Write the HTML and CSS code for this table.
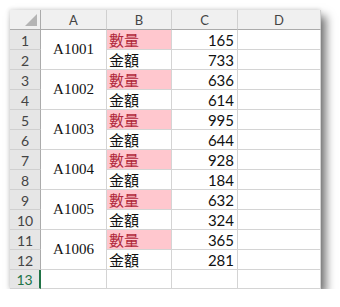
FILE: index.html
```html
<!DOCTYPE html>
<html>
<head>
<meta charset="utf-8">
<link rel="stylesheet" href="styles.css">
</head>
<body>
<div class="sheet">
  <div class="corner hdr"><span class="tri"></span></div>
  <div class="col hdr">A</div>
  <div class="col hdr">B</div>
  <div class="col hdr">C</div>
  <div class="col hdr last">D</div>

  <div class="rh hdr">1</div><div class="id span2">A1001</div><div class="lbl qty">數量</div><div class="num">165</div><div class="cell last"></div>
  <div class="rh hdr">2</div><div class="lbl">金額</div><div class="num">733</div><div class="cell last"></div>
  <div class="rh hdr">3</div><div class="id span2">A1002</div><div class="lbl qty">數量</div><div class="num">636</div><div class="cell last"></div>
  <div class="rh hdr">4</div><div class="lbl">金額</div><div class="num">614</div><div class="cell last"></div>
  <div class="rh hdr">5</div><div class="id span2">A1003</div><div class="lbl qty">數量</div><div class="num">995</div><div class="cell last"></div>
  <div class="rh hdr">6</div><div class="lbl">金額</div><div class="num">644</div><div class="cell last"></div>
  <div class="rh hdr">7</div><div class="id span2">A1004</div><div class="lbl qty">數量</div><div class="num">928</div><div class="cell last"></div>
  <div class="rh hdr">8</div><div class="lbl">金額</div><div class="num">184</div><div class="cell last"></div>
  <div class="rh hdr">9</div><div class="id span2">A1005</div><div class="lbl qty">數量</div><div class="num">632</div><div class="cell last"></div>
  <div class="rh hdr">10</div><div class="lbl">金額</div><div class="num">324</div><div class="cell last"></div>
  <div class="rh hdr">11</div><div class="id span2">A1006</div><div class="lbl qty">數量</div><div class="num">365</div><div class="cell last"></div>
  <div class="rh hdr">12</div><div class="lbl">金額</div><div class="num">281</div><div class="cell last"></div>
  <div class="rh hdr sel">13</div><div class="cell"></div><div class="cell"></div><div class="cell"></div><div class="cell last"></div>
</div>
</body>
</html>
```
FILE: styles.css
```css
html, body {
  margin: 0;
  padding: 0;
  background: #ffffff;
}
body {
  padding: 10px 0 0 10px;
}
.sheet {
  display: grid;
  grid-template-columns: 31px 66px 65px 66px 83px;
  grid-template-rows: 20px repeat(12, 20px) 19px;
  width: 311px;
  box-shadow: 5px 6px 9px rgba(0, 0, 0, 0.55), -1px -1px 4px rgba(0, 0, 0, 0.12);
  background: #ffffff;
  font-family: "Lato", "Liberation Sans", sans-serif;
}
.sheet > div {
  box-sizing: border-box;
  border-right: 1px solid #d4d4d4;
  border-bottom: 1px solid #d4d4d4;
  display: flex;
  align-items: center;
  overflow: hidden;
  white-space: nowrap;
}
.hdr {
  background: #e6e6e6;
  color: #444444;
  font-size: 13px;
  justify-content: center;
}
.col {
  background: #f0f0f0;
  border-bottom: 1px solid #ababab !important;
  border-right: 1px solid #d0d0d0 !important;
}
.corner {
  background: #f0f0f0;
  border-bottom: 1px solid #ababab !important;
  border-right: 1px solid #ababab !important;
  position: relative;
}
.tri {
  position: absolute;
  right: 3px;
  bottom: 3px;
  width: 0;
  height: 0;
  border-left: 12px solid transparent;
  border-bottom: 12px solid #b4b4b4;
}
.rh {
  border-right: 1px solid #ababab !important;
  border-bottom: 1px solid #d0d0d0 !important;
  font-size: 14px;
  padding-top: 1px;
}
.sel {
  color: #217346;
  border-right: 2px solid #217346 !important;
}
.last {
  border-right: 1px solid #c8c8c8;
}
.id {
  grid-row: span 2;
  justify-content: center;
  font-family: "Liberation Serif", "Noto Sans CJK TC", serif;
  font-size: 15px;
  color: #111111;
}
.lbl {
  font-family: "Noto Sans CJK TC", sans-serif;
  font-size: 15px;
  color: #111111;
  padding-left: 2px;
}
.qty {
  background: #ffc7ce;
  color: #b0273a;
}
.num {
  justify-content: flex-end;
  padding-right: 3px;
  font-size: 15px;
  color: #111111;
}
```
